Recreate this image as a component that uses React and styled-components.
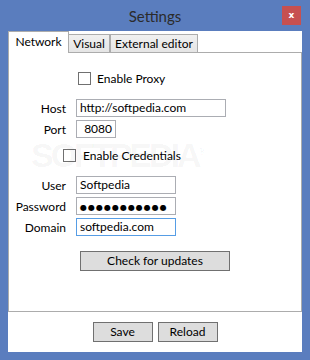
import styled, { createGlobalStyle } from 'styled-components'

const GlobalStyle = createGlobalStyle`
  html, body {
    margin: 0;
    padding: 0;
    background: #5a7dbe;
  }
  * {
    box-sizing: border-box;
  }
`

export default function App() {
  return (
    <Window>
      <GlobalStyle />
      <TitleBar>
        <span />
        <Title>Settings</Title>
        <CloseButton>x</CloseButton>
      </TitleBar>
      <Client>
        <TabStrip>
          <Tab selected width={61}>Network</Tab>
          <Tab width={42} style={{ marginLeft: -1 }}>Visual</Tab>
          <Tab width={88}>External editor</Tab>
        </TabStrip>
        <Panel>
          <Watermark>SOFTPEDIA<sup>®</sup></Watermark>
          <CheckRow top={19} left={69} gap={6}>
            <CheckBox />
            <span>Enable Proxy</span>
          </CheckRow>
          <FieldGrid top={14}>
            <Label>Host</Label>
            <TextBox width={150}>http://softpedia.com</TextBox>
            <Label>Port</Label>
            <TextBox width={40} align="right">8080</TextBox>
          </FieldGrid>
          <CheckRow top={11} left={54} gap={7}>
            <CheckBox />
            <span>Enable Credentials</span>
          </CheckRow>
          <FieldGrid top={14}>
            <Label>User</Label>
            <TextBox width={100}>Softpedia</TextBox>
            <Label>Password</Label>
            <TextBox width={100}><Dots>●●●●●●●●●●●</Dots></TextBox>
            <Label>Domain</Label>
            <TextBox width={100} focused>softpedia.com</TextBox>
          </FieldGrid>
          <Button width={150} style={{ marginTop: 15, alignSelf: 'center' }}>Check for updates</Button>
        </Panel>
        <Footer>
          <Button width={60}>Save</Button>
          <Button width={60}>Reload</Button>
        </Footer>
      </Client>
    </Window>
  )
}

const Window = styled.div`
  width: 310px;
  height: 360px;
  background: #5a7dbe;
  display: flex;
  flex-direction: column;
  font-family: Lato, "Liberation Sans", sans-serif;
  font-size: 12px;
  color: #000;
`

const TitleBar = styled.div`
  height: 31px;
  display: grid;
  grid-template-columns: 1fr auto 1fr;
  align-items: start;
`

const Title = styled.div`
  margin-top: 6px;
  font-size: 15px;
  line-height: 20px;
  color: #2b2b2b;
`

const CloseButton = styled.div`
  justify-self: end;
  margin: 6px 9px 0 0;
  width: 19px;
  height: 19px;
  background: #c75050;
  color: #fff;
  font-family: "DejaVu Sans", sans-serif;
  font-weight: bold;
  font-size: 9px;
  line-height: 18px;
  text-align: center;
`

const Client = styled.div`
  flex: 1;
  margin: 0 8px 8px;
  background: #fff;
  display: flex;
  flex-direction: column;
`

const TabStrip = styled.div`
  height: 21px;
  display: flex;
  align-items: flex-end;
`

const Tab = styled.div`
  width: ${p => p.width}px;
  height: ${p => (p.selected ? 22 : 18)}px;
  margin-bottom: ${p => (p.selected ? -1 : 0)}px;
  position: relative;
  z-index: ${p => (p.selected ? 2 : 1)};
  border: 1px solid #acacac;
  border-bottom: none;
  background: ${p => (p.selected ? '#fff' : 'linear-gradient(#f0f0f0, #e5e5e5)')};
  display: flex;
  align-items: center;
  justify-content: center;
  padding-bottom: ${p => (p.selected ? 2 : 0)}px;
  white-space: nowrap;
`

const Panel = styled.div`
  height: 260px;
  border: 1px solid #acacac;
  display: flex;
  flex-direction: column;
  position: relative;
`

const Watermark = styled.div`
  position: absolute;
  left: 22px;
  top: 83px;
  font-family: "Liberation Sans", sans-serif;
  font-weight: bold;
  font-size: 34px;
  letter-spacing: -3px;
  color: rgba(0, 0, 0, 0.045);
  pointer-events: none;
  sup {
    font-size: 10px;
    letter-spacing: 0;
  }
`

const CheckRow = styled.div`
  margin: ${p => p.top}px 0 0 ${p => p.left}px;
  height: 13px;
  display: flex;
  align-items: center;
  gap: ${p => p.gap}px;
  line-height: 13px;
`

const CheckBox = styled.span`
  width: 13px;
  height: 13px;
  border: 1px solid #707070;
  background: #fff;
`

const FieldGrid = styled.div`
  margin-top: ${p => p.top}px;
  display: grid;
  grid-template-columns: 57px auto;
  column-gap: 10px;
  row-gap: 3px;
  justify-content: start;
  align-items: center;
`

const Label = styled.div`
  text-align: right;
  white-space: nowrap;
`

const TextBox = styled.div`
  width: ${p => p.width}px;
  height: 18px;
  border: 1px solid ${p => (p.focused ? '#569de5' : '#abadb3')};
  padding: 0 3px;
  line-height: 16px;
  text-align: ${p => p.align || 'left'};
  white-space: nowrap;
  overflow: hidden;
`

const Dots = styled.span`
  font-family: "DejaVu Sans", sans-serif;
  font-size: 8px;
  letter-spacing: 1px;
`

const Button = styled.div`
  width: ${p => p.width}px;
  height: 20px;
  border: 1px solid #707070;
  background: #dddddd;
  line-height: 18px;
  text-align: center;
`

const Footer = styled.div`
  flex: 1;
  display: flex;
  justify-content: center;
  gap: 5px;
  padding-top: 10px;
`
